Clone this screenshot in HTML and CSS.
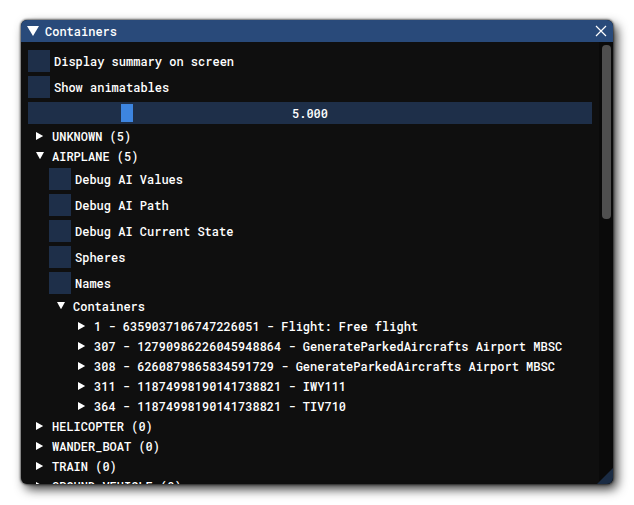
FILE: index.html
```html
<!DOCTYPE html>
<html lang="en">
<head>
<meta charset="utf-8">
<title>Containers</title>
<link rel="stylesheet" href="styles.css">
</head>
<body>

    <div class="window">
        <div class="titlebar">
            <button class="collapse" aria-label="Collapse"></button>
            <span class="title">Containers</span>
            <button class="close" aria-label="Close">
                <svg width="12" height="12" viewBox="0 0 12 12"><path d="M1 1L11 11M11 1L1 11" stroke="#fff" stroke-width="1.2"/></svg>
            </button>
        </div>
        <div class="body">
            <div class="content">
                <label class="check"><input type="checkbox">Display summary on screen</label>
                <label class="check"><input type="checkbox">Show animatables</label>
                <div class="slider">
                    <input id="distance" type="range" min="0" max="30" step="0.001" value="5" aria-label="Distance">
                    <output id="distanceValue" for="distance">5.000</output>
                </div>
                <details><summary>UNKNOWN (5)</summary></details>
                <details open>
                    <summary>AIRPLANE (5)</summary>
                    <div class="children">
                        <label class="check"><input type="checkbox">Debug AI Values</label>
                        <label class="check"><input type="checkbox">Debug AI Path</label>
                        <label class="check"><input type="checkbox">Debug AI Current State</label>
                        <label class="check"><input type="checkbox">Spheres</label>
                        <label class="check"><input type="checkbox">Names</label>
                        <details open>
                            <summary>Containers</summary>
                            <div class="children">
                                <details><summary>1 - 6359037106747226051 - Flight: Free flight</summary></details>
                                <details><summary>307 - 12790986226045948864 - GenerateParkedAircrafts Airport MBSC</summary></details>
                                <details><summary>308 - 6260879865834591729 - GenerateParkedAircrafts Airport MBSC</summary></details>
                                <details><summary>311 - 11874998190141738821 - IWY111</summary></details>
                                <details><summary>364 - 11874998190141738821 - TIV710</summary></details>
                            </div>
                        </details>
                    </div>
                </details>
                <details><summary>HELICOPTER (0)</summary></details>
                <details><summary>WANDER_BOAT (0)</summary></details>
                <details><summary>TRAIN (0)</summary></details>
                <details><summary>GROUND_VEHICLE (0)</summary></details>
            </div>
            <div class="scrollbar"><div class="grab"></div></div>
        </div>
        <div class="grip"></div>
    </div>
    <script>
    const distance = document.getElementById("distance")
    const distanceValue = document.getElementById("distanceValue")

    distance.oninput = function() {
        distanceValue.value = Number(distance.value).toFixed(3)
    }
    </script>

</body>
</html>
```
FILE: styles.css
```css
* {
  box-sizing: border-box;
}

body {
  margin: 0;
  height: 100vh;
  padding: 20px 21px 21px;
  background: #fff;
  color: #fff;
  font: 500 12px/16px "Roboto Mono", "DejaVu Sans Mono", monospace;
}

.window {
  position: relative;
  display: flex;
  flex-direction: column;
  height: 100%;
  overflow: hidden;
  border-radius: 6px;
  background: #0f0f0f;
  box-shadow: 0 0 2px 1px rgba(0, 0, 0, 0.5), 4px 5px 11px rgba(0, 0, 0, 0.8);
}

/* Title bar */
.titlebar {
  flex: none;
  display: flex;
  align-items: center;
  height: 22px;
  padding: 0 6px;
  background: #294a7a;
}

.titlebar button {
  border: 0;
  padding: 0;
  background: none;
}

.titlebar .collapse {
  width: 12px;
  height: 10px;
  background: #fff;
  clip-path: polygon(0 0, 100% 0, 50% 100%);
}

.title {
  flex: 1;
  padding-left: 6px;
}

.close svg {
  display: block;
}

/* Scrolling area */
.body {
  flex: 1;
  display: flex;
  min-height: 0;
}

.content {
  flex: 1;
  min-width: 0;
  overflow: hidden;
  padding: 8px 7px;
  white-space: nowrap;
}

.content > * + *,
.children > * {
  margin-top: 4px;
}

.scrollbar {
  flex: none;
  width: 14px;
  padding: 3px 2px 3px 3px;
  background: #0a0a0a;
}

.grab {
  height: 40%;
  border-radius: 4px;
  background: #4f4f4f;
}

/* Checkboxes */
.check {
  display: flex;
  align-items: center;
  gap: 4px;
  height: 22px;
}

.check input {
  appearance: none;
  width: 22px;
  height: 22px;
  margin: 0;
  background: #1e2f49;
}

.check input:checked {
  background: #4296fa;
}

/* Slider */
.slider {
  display: grid;
  align-items: center;
  height: 22px;
  background: #1e2f49;
}

.slider > * {
  grid-area: 1 / 1;
}

.slider input {
  appearance: none;
  width: 100%;
  height: 22px;
  margin: 0;
  padding: 0 2px;
  background: none;
}

.slider input::-webkit-slider-thumb {
  appearance: none;
  width: 12px;
  height: 18px;
  background: #3d85e0;
}

.slider output {
  text-align: center;
  pointer-events: none;
}

/* Tree */
summary {
  display: flex;
  align-items: center;
  height: 16px;
  list-style: none;
}

summary::before {
  content: "";
  width: 8px;
  height: 8px;
  margin: 0 8px;
  background: #fff;
  clip-path: polygon(0 0, 90% 50%, 0 100%);
}

details[open] > summary::before {
  clip-path: polygon(0 0, 100% 0, 50% 90%);
}

.children {
  padding-left: 21px;
}

/* Resize grip */
.grip {
  position: absolute;
  right: 0;
  bottom: 0;
  width: 16px;
  height: 16px;
  background: #1a2b43;
  clip-path: polygon(100% 0, 100% 100%, 0 100%);
}
```
